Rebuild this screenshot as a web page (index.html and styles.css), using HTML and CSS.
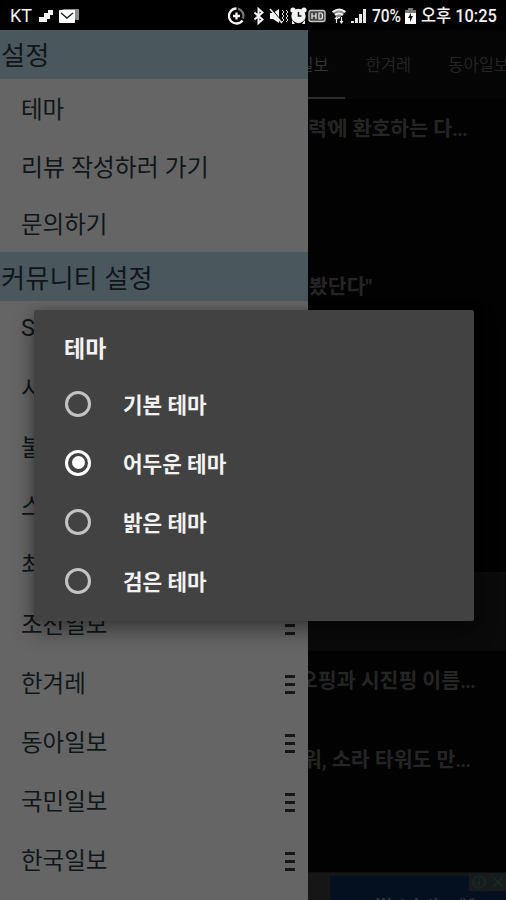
FILE: index.html
```html
<!DOCTYPE html>
<html lang="ko">
<head>
<meta charset="utf-8">
<title>테마</title>
<link rel="stylesheet" href="styles.css">
</head>
<body>
<div class="phone">
  <header class="status">
    <span class="carrier">KT</span>
    <svg class="notes" width="40" height="16" viewBox="0 0 40 16"><path d="M1 14v-5h5V5h4V2h5v5h-3v4H9v3z" fill="#f2f2f2"/><path d="M24 1h17v11h-3z" fill="#8c8c8c"/><rect x="21" y="2" width="16" height="13" rx="1" fill="#fff"/><path d="M23 5l6 5L35 5" fill="none" stroke="#222" stroke-width="1.500"/></svg>
    <svg class="indicators" width="140" height="20" viewBox="0 0 140 20">
      <g fill="none" stroke="#f4f4f4" stroke-width="2.300">
        <path d="M8.500 2.500a7.500 7.500 0 1 0 6 12"/><path d="M10 2.600a7.500 7.500 0 0 1 5 10" stroke="#777"/><path d="M8.500 6.500v7M5 10h7"/>
        <path d="M26.500 6.500l8 7-4 3.500V3l4 3.500-8 7" stroke-width="2"/>
      </g>
      <g fill="#f4f4f4"><path d="M42 7h3l6-4v14l-6-4h-3z"/><circle cx="70.500" cy="10" r="7.200"/><circle cx="65" cy="4" r="2.600"/><circle cx="76" cy="4" r="2.600"/><path d="M64 14v4h3zM77 14v4h-3z"/></g>
      <path d="M43 2l11 14" stroke="#000" stroke-width="1.200"/><path d="M42 3l12 14" stroke="#eee" stroke-width="1.600"/>
      <path d="M54 4l2 2-2 2 2 2-2 2 2 2-2 2M58 4l2 2-2 2 2 2-2 2 2 2-2 2" fill="none" stroke="#ddd"/>
      <path d="M70.500 6v4h3" fill="none" stroke="#111" stroke-width="1.500"/>
      <rect x="81" y="4.500" width="16" height="11" rx="2" fill="#444" stroke="#c8c8c8" stroke-width="1.300"/>
      <path d="M84 7v6M88 7v6M84 10h4M91 7v6h1.500q2 0 2-3T92.500 7z" fill="none" stroke="#eee" stroke-width="1.200"/>
      <path d="M104.500 6q7-5 13 0l-6.500 6.500z" fill="#8e8e8e"/>
      <path d="M104.500 6q7-5 13 0M107 9q4-3 8 0M111 11v1.500" fill="none" stroke="#f4f4f4" stroke-width="1.800"/>
      <path d="M108.500 11v6M107 13l1.500-2 1.500 2M113.500 11v6M112 15l1.500 2 1.500-2" fill="none" stroke="#eee" stroke-width="1.200"/>
      <path d="M123 17v-2h3v2zM127 17v-5h3v5zM131 17V8h3v9zM135 17V3h3v14z" fill="#e8e8e8"/>
    </svg>
    <span class="percent">70%</span>
    <svg class="battery" width="11" height="17" viewBox="0 0 11 17"><path d="M3 0h5v2h3v3H0V2h3z" fill="#777"/><path d="M0 5h11v11H0z" fill="#fff"/><path d="M6 5l-3 5h2v4l3-6H6z" fill="#111"/></svg>
    <span class="clock">오후 10:25</span>
  </header>

  <main class="news">
    <nav class="tabs">
      <span class="tab active">조선일보</span><span class="tab">한겨레</span><span class="tab">동아일보</span>
    </nav>
    <ul class="feed">
      <li class="story first">력<span class="quote">'</span>에 환호하는 다<span class="dots">...</span></li>
      <li class="story second">봤단다"</li>
      <li class="selected"></li>
      <li class="story third">오핑과 시진핑 이름<span class="dots">...</span></li>
      <li class="story fourth">워, 소라 타워도 만<span class="dots">...</span></li>
    </ul>
    <div class="ad">
      <div class="banner"><span>Watch the #1</span></div>
      <svg class="adchoices" width="37" height="18" viewBox="0 0 37 18"><g fill="none" stroke="#162b26" stroke-width="1.700"><circle cx="10" cy="9" r="6"/><path d="M10 8v5M10 5v1.500M24 4l10 10M34 4L24 14"/></g></svg>
    </div>
  </main>

  <aside class="drawer">
    <h2>설정</h2>
    <ul class="general"><li>테마</li><li class="review">리뷰 작성하러 가기</li><li>문의하기</li></ul>
    <h2 class="community">커뮤니티 설정</h2>
    <ul class="sites">
      <li>S<i></i></li><li>시<i></i></li><li>불<i></i></li><li>스<i></i></li><li>최<i></i></li>
      <li>조선일보<i></i></li><li>한겨레<i></i></li><li>동아일보<i></i></li><li>국민일보<i></i></li><li>한국일보<i></i></li>
    </ul>
  </aside>

  <section class="dialog">
    <h1>테마</h1>
    <div class="option"><b class="radio"></b>기본 테마</div>
    <div class="option"><b class="radio checked"></b>어두운 테마</div>
    <div class="option"><b class="radio"></b>밝은 테마</div>
    <div class="option"><b class="radio"></b>검은 테마</div>
  </section>
</div>
</body>
</html>
```

FILE: styles.css
```css
* { box-sizing: border-box; margin: 0; padding: 0; }
body { background: #000; font-family: Roboto, "Noto Sans CJK KR", sans-serif; }
ul { list-style: none; }
.phone { position: relative; width: 506px; height: 900px; overflow: hidden; display: flex; flex-direction: column; }

.status { height: 30px; flex: none; display: flex; align-items: center; color: #f2f2f2; font-size: 18px; line-height: 30px; padding: 2px 0 0 10px; white-space: nowrap; }
.carrier { width: 28px; }
.notes { overflow: visible; }
.indicators { margin-left: 150px; }
.percent { width: 30px; margin-left: 4px; font-weight: 500; transform: scaleX(.86); transform-origin: left; }
.battery { margin-left: 3px; }
.clock { margin-left: 5px; font-weight: 500; transform: scaleX(.91); transform-origin: left; }

.news { position: relative; flex: 1; display: flex; flex-direction: column; background: #020202; }
.tabs { height: 69px; flex: none; display: flex; gap: 37px; padding-left: 268px; background: #050505; color: #242424; font-size: 16.500px; line-height: 71px; white-space: nowrap; }
.tab.active { color: #333; padding-right: 16px; margin-right: -16px; border-bottom: 2px solid #2c2c2c; }
.tab { flex: none; }
.feed { flex: 1; display: flex; flex-direction: column; color: #252525; font-size: 20.500px; font-weight: 700; white-space: nowrap; }
.story { flex: none; padding-left: 307px; line-height: 61px; }
.quote { letter-spacing: -1.500px; }
.dots { letter-spacing: -1px; }
.first { height: 158px; padding-left: 308px; }
.second { height: 315px; padding-left: 309px; }
.selected { height: 79px; flex: none; background: #0a0a0a; }
.third { height: 79px; padding-left: 299px; }
.fourth { padding-left: 303px; }
.ad { height: 28px; flex: none; display: flex; padding-left: 330px; background: #161616; position: relative; border-top: 1px solid #101010; }
.banner { flex: 1; margin-top: 3px; background: #04101f; overflow: hidden; color: #303841; font-size: 17px; font-weight: 700; line-height: 24px; padding: 16px 0 0 46px; white-space: nowrap; }
.adchoices { position: absolute; right: 0; top: 0; background: #181b1b; }

.drawer { position: absolute; left: 0; top: 30px; width: 308px; height: 870px; background: #656565; color: #101619; overflow: hidden; }
.drawer h2 { height: 49px; padding: 1px 0 0 1px; background: #4a585e; font-size: 26.300px; line-height: 51px; font-weight: 400; }
.drawer .community { padding-top: 2px; }
.general { height: 173px; display: flex; flex-direction: column; }
.general li { flex: 1; display: flex; align-items: center; padding-left: 21px; font-size: 23.500px; font-weight: 400; }
.general .review { font-size: 23.900px; }
.sites { margin-top: -3px; }
.sites li { display: flex; align-items: center; justify-content: space-between; height: 59px; padding: 0 13px 0 21px; font-size: 23.500px; font-weight: 400; }
.sites i { width: 10px; height: 19px; border-top: 3px solid #161818; border-bottom: 3px solid #161818; background: linear-gradient(#161818, #161818) center / 10px 3px no-repeat; margin-top: 5px; }

.dialog { position: absolute; left: 34px; top: 310px; width: 440px; height: 311px; border-radius: 2px; background: #424242; color: #f2f2f2; padding: 9px 31px; box-shadow: 0 10px 22px rgba(0,0,0,.4), 0 0 12px rgba(0,0,0,.18); }
.dialog h1 { height: 55px; margin-left: -1px; font-size: 23px; line-height: 61px; font-weight: 700; }
.option { height: 59px; display: flex; align-items: center; font-size: 21.300px; font-weight: 600; }
.radio { width: 26px; height: 26px; border: 3px solid #c3c3c3; border-radius: 50%; margin-right: 32px; display: grid; place-items: center; }
.radio.checked { border-color: #fff; }
.radio.checked::after { content: ""; width: 13px; height: 13px; border-radius: 50%; background: #fff; }
```
